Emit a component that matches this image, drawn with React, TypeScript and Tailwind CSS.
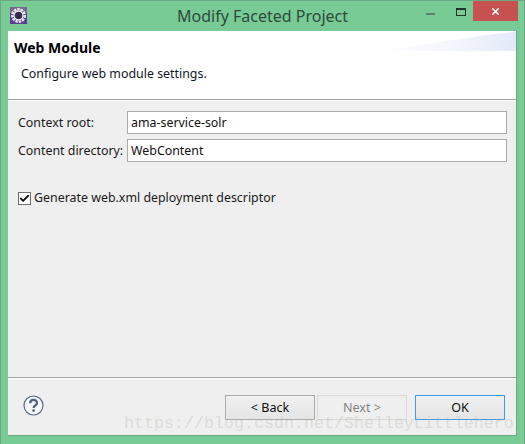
import { Check, X } from "lucide-react";

function DialogButton({ label, disabled, primary }: { label: string; disabled?: boolean; primary?: boolean }) {
  const tone = disabled
    ? "border-[#d9d9d9] text-[#838383] from-[#efefef] to-[#efefef]"
    : primary
      ? "border-[#3c9bf0] text-[#111] from-[#f0f0f0] to-[#e5e5e5]"
      : "border-[#acacac] text-[#111] from-[#f0f0f0] to-[#e5e5e5]";
  return (
    <button className={`w-[90px] h-[25px] border bg-gradient-to-b text-[12.6px] leading-[22px] ${tone}`}>{label}</button>
  );
}

function Field({ label, value }: { label: string; value: string }) {
  return (
    <div className="flex items-center h-[23px]">
      <span className="w-[109px] shrink-0 whitespace-nowrap pt-[1px] text-[#1a1a1a]">{label}</span>
      <div className="flex-1 h-[23px] border border-[#ababab] bg-white pl-[3px] leading-[22px] text-[#111]">{value}</div>
    </div>
  );
}

function EclipseIcon() {
  return (
    <svg width="17" height="17" viewBox="0 0 17 17">
      <rect width="17" height="17" fill="#5b3f93" />
      <rect width="17" height="6" fill="#77668f" />
      <circle cx="8.5" cy="8.5" r="6.2" fill="none" stroke="#e8e8e8" strokeWidth="2.6" strokeDasharray="2.4 1" />
      <circle cx="8.5" cy="8.5" r="4.6" fill="#35284f" />
      <circle cx="8.5" cy="8.5" r="4.4" fill="none" stroke="#f5f5f5" strokeWidth="1.2" />
    </svg>
  );
}

export default function App() {
  return (
    <div
      className="relative w-[525px] h-[444px] overflow-hidden bg-[#78cb95] border-t border-x border-[#6aa884] flex flex-col text-[12.4px]"
      style={{ fontFamily: '"Noto Sans", "Open Sans", sans-serif' }}
    >
      <div className="relative h-[30px] shrink-0 flex items-center justify-center">
        <div className="absolute left-[9px] top-[6px]">
          <EclipseIcon />
        </div>
        <span className="text-[16px] text-[#2f4a3e]">Modify Faceted Project</span>
        <div className="absolute right-0 top-0 flex items-start">
          <div className="w-[9px] h-[2px] mt-[12px] mr-[21px] bg-[#5d7f6c]" />
          <div className="w-[10px] h-[8px] mt-[7px] mr-[7px] border border-t-2 border-[#23352b]" />
          <div className="w-[45px] h-[20px] mr-[6px] bg-[#c75050] flex items-center justify-center">
            <X className="w-[11px] h-[11px] text-white" strokeWidth={3.5} />
          </div>
        </div>
      </div>

      <div className="mx-[7px] h-[405px] shrink-0 flex flex-col bg-[#efefef] border-r border-b border-[#6aa884]">
        <div className="relative h-[69px] shrink-0 bg-white border-b border-[#a0a0a0]">
          <div className="absolute right-0 top-0 w-[140px] h-[20px]">
            <svg width="140" height="20" viewBox="0 0 140 20" preserveAspectRatio="none">
              <defs>
                <linearGradient id="banner" x1="0" x2="1" y1="0" y2="0">
                  <stop offset="0" stopColor="#ffffff" />
                  <stop offset="0.6" stopColor="#f3f5fc" />
                  <stop offset="1" stopColor="#e3e9f8" />
                </linearGradient>
              </defs>
              <path d="M0 20 C50 15 90 5 140 1 L140 20 Z" fill="url(#banner)" />
            </svg>
          </div>
          <div className="pl-[6px] pt-[8px] text-[14px] font-bold leading-[18px] text-black">Web Module</div>
          <div className="pl-[13px] pt-[8px] leading-[18px] text-[#10182a]">Configure web module settings.</div>
        </div>

        <div className="flex-1 border-t border-white pt-[10px] pl-[10px] pr-[9px]">
          <div className="flex flex-col gap-[5px]">
            <Field label="Context root:" value="ama-service-solr" />
            <Field label="Content directory:" value="WebContent" />
          </div>
          <div className="flex items-center gap-[3px] mt-[29px]">
            <div className="w-[13px] h-[13px] border border-[#707070] bg-white flex items-center justify-center">
              <Check className="w-[11px] h-[11px] text-[#111]" strokeWidth={4} />
            </div>
            <span className="text-[#1a1a1a] leading-[14px]">Generate web.xml deployment descriptor</span>
          </div>
        </div>

        <div className="h-[58px] shrink-0 border-t border-[#a0a0a0]">
          <div className="h-px bg-white" />
          <div className="flex items-start pt-[16px] pl-[15px] pr-[11px]">
            <svg width="21" height="21" viewBox="0 0 21 21">
              <circle cx="10.5" cy="10.5" r="9.5" fill="#f6f7f9" stroke="#5c6b91" strokeWidth="1.2" />
              <path d="M7.2 8.2 C7.2 3.9 14 3.9 14 8 C14 10.6 10.6 10.4 10.6 13" fill="none" stroke="#4b5b85" strokeWidth="2.2" />
              <rect x="9.4" y="14.3" width="2.4" height="2.4" fill="#4b5b85" />
            </svg>
            <div className="ml-auto flex">
              <DialogButton label="< Back" />
              <div className="ml-[2px]"><DialogButton label="Next >" disabled /></div>
              <div className="ml-[8px]"><DialogButton label="OK" primary /></div>
            </div>
          </div>
        </div>
      </div>

      <div
        className="absolute left-[123px] top-[413px] text-[16.67px] leading-[20px] text-[#a8a89a]/30 whitespace-nowrap pointer-events-none"
        style={{ fontFamily: '"Liberation Mono", monospace' }}
      >
        https://blog.csdn.net/ShelleyLittlehero
      </div>
    </div>
  );
}
